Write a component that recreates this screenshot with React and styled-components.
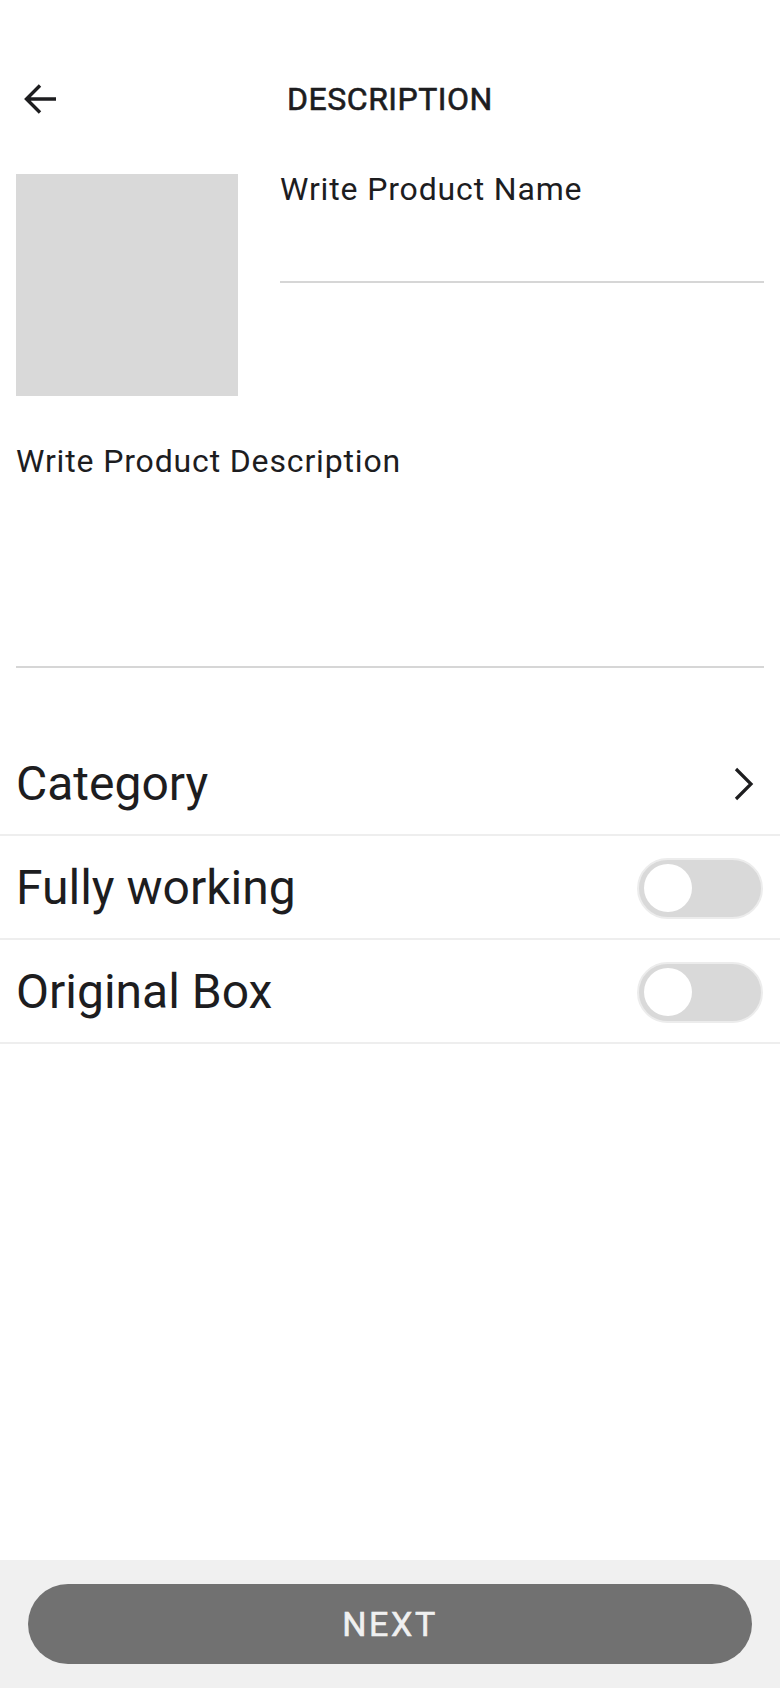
import React, { useState } from "react";
import styled, { createGlobalStyle } from "styled-components";

const GlobalStyle = createGlobalStyle`
  html, body {
    margin: 0;
    padding: 0;
    background: #ffffff;
  }
  body {
    font-family: Roboto, "Liberation Sans", sans-serif;
    color: #1d1d1f;
  }
  * {
    box-sizing: border-box;
  }
`;

const Screen = styled.div`
  min-height: 100vh;
  display: flex;
  flex-direction: column;
`;

const Content = styled.main`
  flex: 1;
  display: flex;
  flex-direction: column;
`;

// top bar
const TopBar = styled.header`
  margin-top: 59px;
  height: 80px;
  display: grid;
  grid-template-columns: 1fr auto 1fr;
  align-items: center;
`;

const BackButton = styled.button`
  justify-self: start;
  margin-left: 24px;
  padding: 0;
  border: 0;
  background: none;
  display: flex;
  color: #1d1d1f;
`;

// no medium cut installed: regular weight with a thin stroke
const Title = styled.h1`
  margin: 0;
  font-size: 32px;
  line-height: 40px;
  font-weight: 400;
  -webkit-text-stroke: 0.6px #1d1d1f;
  letter-spacing: 0.5px;
  color: #1d1d1f;
`;

// product block
const ProductRow = styled.section`
  margin-top: 35px;
  padding: 0 16px;
  display: flex;
  align-items: flex-start;
  gap: 42px;
`;

const PhotoSlot = styled.div`
  width: 222px;
  height: 222px;
  flex-shrink: 0;
  background: #d9d9d9;
`;

const Field = styled.div`
  flex: 1;
  height: ${(p) => p.$height}px;
  border-bottom: 2px solid #d6d6d6;
  font-size: 32px;
  line-height: 30px;
  letter-spacing: 0.85px;
  color: #1d1d1f;
`;

const DescriptionWrap = styled.section`
  margin-top: 50px;
  padding: 0 16px;
  display: flex;
`;

// option list
const OptionList = styled.ul`
  list-style: none;
  margin: 64px 0 0;
  padding: 0;
`;

const OptionRow = styled.li`
  height: 104px;
  padding: 2px 17px 0 16px;
  display: flex;
  align-items: center;
  justify-content: space-between;
  border-bottom: 2px solid #eeeeee;
`;

const OptionLabel = styled.span`
  font-size: 48px;
  line-height: 56px;
  color: #1d1d1f;
`;

const Chevron = styled.svg`
  margin-right: 9px;
  color: #1d1d1f;
`;

const Track = styled.button`
  width: 126px;
  height: 61px;
  padding: 0 5px;
  border: 2px solid #ececec;
  border-radius: 31px;
  background: #d9d9d9;
  display: flex;
  align-items: center;
  justify-content: ${(p) => (p.$on ? "flex-end" : "flex-start")};
  cursor: pointer;
`;

const Thumb = styled.span`
  width: 48px;
  height: 48px;
  border-radius: 50%;
  background: #ffffff;
`;

// footer
const Footer = styled.footer`
  height: 128px;
  padding: 24px 28px;
  background: #f0f0f0;
`;

const NextButton = styled.button`
  width: 100%;
  height: 80px;
  border: 0;
  border-radius: 40px;
  background: #717171;
  color: #f0f0f0;
  font-family: Roboto, "Liberation Sans", sans-serif;
  font-size: 34px;
  font-weight: 400;
  -webkit-text-stroke: 0.6px #f0f0f0;
  letter-spacing: 2.6px;
`;

const Toggle = () => {
  const [on, setOn] = useState(false);
  return (
    <Track $on={on} onClick={() => setOn(!on)}>
      <Thumb />
    </Track>
  );
};

export default function App() {
  return (
    <Screen>
      <GlobalStyle />
      <Content>
        <TopBar>
          <BackButton aria-label="back">
            <svg width="32" height="30" viewBox="0 0 32 30" fill="none">
              <path
                d="M32 15H3M16 1.5L2.5 15L16 28.5"
                stroke="currentColor"
                strokeWidth="3.4"
              />
            </svg>
          </BackButton>
          <Title>DESCRIPTION</Title>
        </TopBar>

        <ProductRow>
          <PhotoSlot />
          <Field $height={109}>Write Product Name</Field>
        </ProductRow>

        <DescriptionWrap>
          <Field $height={222}>Write Product Description</Field>
        </DescriptionWrap>

        <OptionList>
          <OptionRow>
            <OptionLabel>Category</OptionLabel>
            <Chevron width="20" height="34" viewBox="0 0 20 34" fill="none">
              <path d="M2 2L17 17L2 32" stroke="currentColor" strokeWidth="3.2" />
            </Chevron>
          </OptionRow>
          <OptionRow>
            <OptionLabel>Fully working</OptionLabel>
            <Toggle />
          </OptionRow>
          <OptionRow>
            <OptionLabel>Original Box</OptionLabel>
            <Toggle />
          </OptionRow>
        </OptionList>
      </Content>

      <Footer>
        <NextButton>NEXT</NextButton>
      </Footer>
    </Screen>
  );
}
